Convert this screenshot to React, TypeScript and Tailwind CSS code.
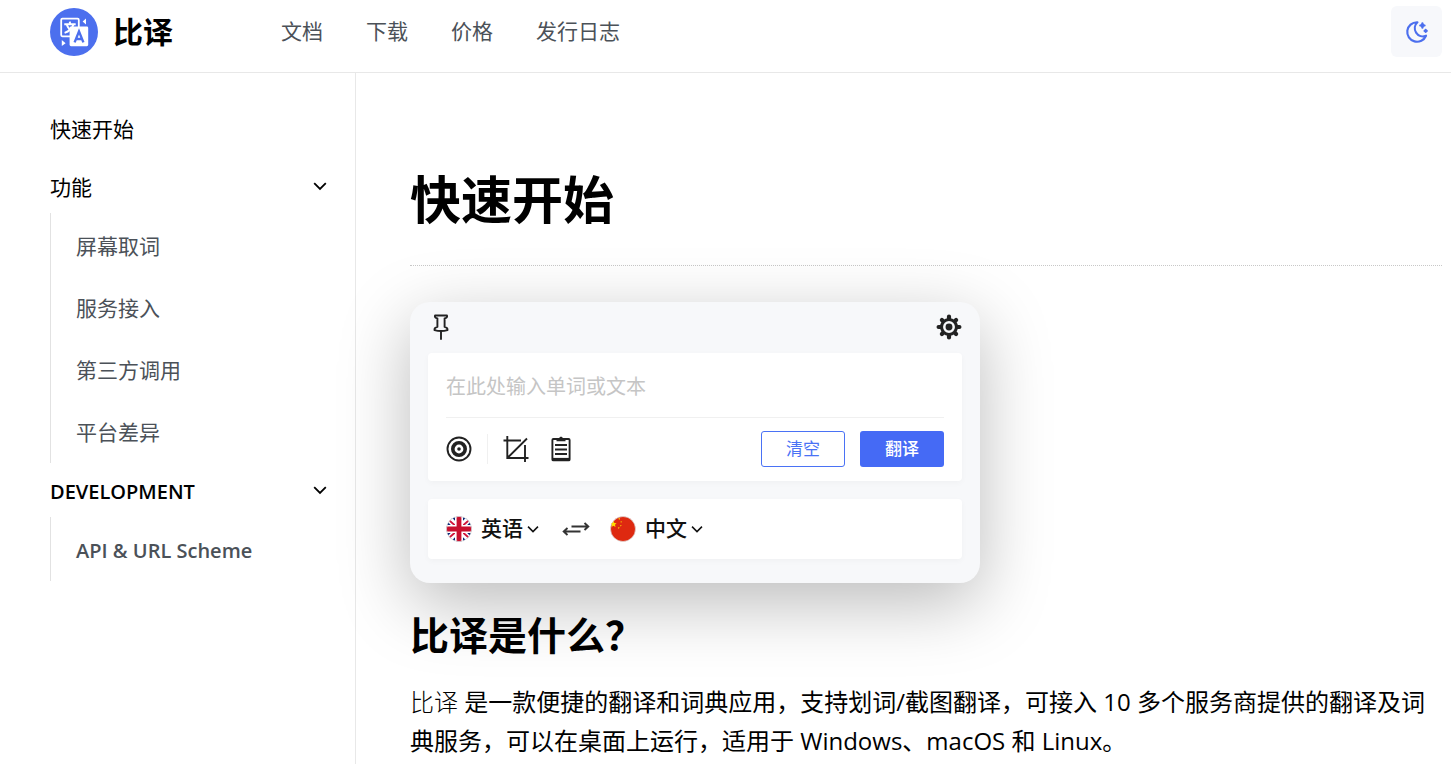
import { useState } from "react";
import clsx from "clsx";

interface NavGroup {
  title: string;
  items: string[];
}

const topLinks = ["文档", "下载", "价格", "发行日志"];

const navGroups: NavGroup[] = [
  { title: "功能", items: ["屏幕取词", "服务接入", "第三方调用", "平台差异"] },
  { title: "DEVELOPMENT", items: ["API & URL Scheme"] },
];

function Logo() {
  return (
    <svg viewBox="0 0 48 48" className="size-12 shrink-0" aria-hidden="true">
      <circle cx="24" cy="24" r="24" fill="#4c6fee" />
      <rect x="11.2" y="10.7" width="17.6" height="17.6" rx="1.2" fill="none" stroke="#fff" strokeWidth="1.8" />
      <g fill="none" stroke="#fff" strokeWidth="1.9">
        <path d="M14.3 16.2h11.4M19.6 13.6l.8 2.4M23.4 16.6c-1.4 4.2-4.4 6.8-8.8 8.2M16.8 16.6c1.2 3.6 3 5.6 6 7" />
      </g>
      <rect x="19.6" y="18.4" width="18.6" height="19.8" rx="1.4" fill="#fff" />
      <path
        d="M24.6 34.4 29 23.4l4.4 11M26.2 31h5.6"
        fill="none"
        stroke="#4c6fee"
        strokeWidth="2.4"
      />
      <path d="M36 10.500v6l-3.400-3zM11.800 32v6l3.800-2.800z" fill="#fff" />
    </svg>
  );
}

function MoonIcon() {
  return (
    <svg viewBox="0 0 24 24" className="size-[26px]" fill="none" stroke="currentColor" strokeWidth="2" strokeLinecap="round" strokeLinejoin="round" aria-hidden="true">
      <path d="M12 3h.393a7.500 7.500 0 0 0 7.920 12.446A9 9 0 1 1 12 2.992z" />
      <path d="M17 4a2 2 0 0 0 2 2 2 2 0 0 0-2 2 2 2 0 0 0-2-2 2 2 0 0 0 2-2" />
      <path d="M19 11h2m-1-1v2" />
    </svg>
  );
}

function Chevron({ className }: { className?: string }) {
  return (
    <svg viewBox="0 0 14 14" className={clsx("shrink-0", className)} fill="none" stroke="currentColor" strokeWidth="1.8" aria-hidden="true">
      <path d="M1.200 4.200L7 10l5.800-5.800" />
    </svg>
  );
}

function PinIcon() {
  return (
    <svg viewBox="0 0 16 26" className="h-[26px] w-4" fill="none" stroke="#222" strokeWidth="1.9" strokeLinecap="round" strokeLinejoin="round" aria-hidden="true">
      <path d="M2 1.500h12c.5 1.500-.4 2.300-2.400 2.800v8.600c2 .5 3.100 1.800 2.900 3.200-4 1.200-9 1.200-13 0-.2-1.400.9-2.700 2.900-3.200V4.300C2.400 3.800 1.500 3 2 1.500z" />
      <path d="M8 17.500v7.500" />
    </svg>
  );
}

function GearIcon() {
  return (
    <svg viewBox="0 0 26 26" className="size-[26px]" aria-hidden="true">
      <g stroke="#222" strokeWidth="4.2" strokeLinecap="round">
        <path d="M13 2.600v20.800M2.600 13h20.800M5.900 5.900l14.200 14.200M20.100 5.900L5.900 20.100" />
      </g>
      <circle cx="13" cy="13" r="7.500" fill="#222" stroke="#222" strokeWidth="3" />
      <circle cx="13" cy="13" r="4.700" fill="#222" stroke="#f7f8fa" strokeWidth="2.500" />
    </svg>
  );
}

function TargetIcon() {
  return (
    <svg viewBox="0 0 26 26" className="size-[26px]" fill="none" stroke="#222" aria-hidden="true">
      <circle cx="13" cy="13" r="11.500" strokeWidth="1.900" />
      <circle cx="13" cy="13" r="6.200" strokeWidth="3.600" />
      <circle cx="13" cy="13" r="1.800" fill="#222" stroke="none" />
    </svg>
  );
}

function CropIcon() {
  return (
    <svg viewBox="0 0 26 26" className="size-[26px]" fill="none" stroke="#222" strokeWidth="1.900" aria-hidden="true">
      <path d="M4.300 0v22h21.200M.500 4.500h17.500M22 9v17M4.300 22L24 2.500" />
    </svg>
  );
}

function ClipboardIcon() {
  return (
    <svg viewBox="0 0 20 26" className="h-[26px] w-5" fill="none" stroke="#222" strokeWidth="1.900" aria-hidden="true">
      <rect x="1.400" y="3" width="17.200" height="21.400" rx="1" />
      <path d="M1 23.400h18" strokeWidth="3" />
      <path d="M4 9h12M4 13.500h12M4 18h12" />
      <path d="M5.500 5.200V2.500H8c.5-2.300 3.500-2.300 4 0h2.500v2.700z" fill="#222" stroke="none" />
    </svg>
  );
}

function SwapIcon() {
  return (
    <svg viewBox="0 0 28 14" className="h-3.5 w-7" fill="none" stroke="#333" strokeWidth="1.900" aria-hidden="true">
      <path d="M9.500 4.500h17M22.500 1l3.800 3.500L22.500 8M18.500 9.500h-17M5.500 6L1.700 9.500 5.500 13" />
    </svg>
  );
}

function UkFlag() {
  return (
    <svg viewBox="0 0 26 26" className="size-[26px] shrink-0" aria-hidden="true">
      <defs>
        <clipPath id="uk">
          <circle cx="13" cy="13" r="12.500" />
        </clipPath>
      </defs>
      <g clipPath="url(#uk)">
        <path d="M0 0h26v26H0z" fill="#0a2a78" />
        <path d="M0 0l26 26M26 0L0 26" stroke="#fff" strokeWidth="6" />
        <path d="M0 1.500l26 23M26 1.500L0 24.500" stroke="#d0143a" strokeWidth="1.700" />
        <path d="M13 0v26M0 13h26" stroke="#fff" strokeWidth="8" />
        <path d="M13 0v26M0 13h26" stroke="#c8102e" strokeWidth="4.800" />
      </g>
      <circle cx="13" cy="13" r="12.600" fill="none" stroke="#ddd" strokeWidth=".7" />
    </svg>
  );
}

function ChinaFlag() {
  return (
    <svg viewBox="0 0 26 26" className="size-[26px] shrink-0" aria-hidden="true">
      <circle cx="13" cy="13" r="12.500" fill="#de2910" stroke="#ddd" strokeWidth=".7" />
      <path d="M3.400 5l1 2 2.200.2-1.600 1.500.5 2.300-2.100-1.200L1.500 11l.5-2.200-1-1.300 1.800-.4z" fill="#ffde00" />
      <path d="M8.200 2.600l1.800-.5-.6 1.800zM10.600 5.300l1.600.5-1.300 1zM10.300 9l1.500.6-1.400.9zM7.800 11.500l1.800-.2-.8 1.700z" fill="#ffde00" />
    </svg>
  );
}

function Header() {
  return (
    <header className="flex items-center border-b border-[#e8e8e8] pt-1.5 pr-[9px] pb-[15px] pl-[50px]">
      <a href="#" className="flex items-center gap-[15px] text-3xl font-bold text-black">
        <Logo />
        比译
      </a>
      <nav className="ml-[108px] flex gap-[43px] text-[21px] text-[#4b5158]">
        {topLinks.map((link) => (
          <a key={link} href="#">
            {link}
          </a>
        ))}
      </nav>
      <button
        type="button"
        aria-label="切换主题"
        className="ml-auto flex size-[51px] items-center justify-center rounded-md bg-[#f7f8fb] text-[#4c6fee]"
      >
        <MoonIcon />
      </button>
    </header>
  );
}

function Sidebar() {
  return (
    <aside className="w-[356px] shrink-0 border-r border-[#e8e8e8] pt-7 pr-7 pl-[50px] text-[21px]">
      <a href="#" className="flex h-[58px] items-center text-black">
        快速开始
      </a>
      {navGroups.map((group) => (
        <section key={group.title}>
          <button type="button" className="flex h-[54px] w-full items-center justify-between text-black">
            <span className={clsx("pt-1", /^[A-Z]/.test(group.title) && "text-xl font-semibold")}>
              {group.title}
            </span>
            <Chevron className="size-3.5" />
          </button>
          <ul className="border-l border-[#e2e2e2] py-px">
            {group.items.map((item) => (
              <li key={item}>
                <a
                  href="#"
                  className={clsx(
                    "flex h-[62px] items-center pt-1 pl-[25px] text-[#4b5158]",
                    /^[A-Z]/.test(item) && "text-xl font-semibold"
                  )}
                >
                  {item}
                </a>
              </li>
            ))}
          </ul>
        </section>
      ))}
    </aside>
  );
}

function Translator() {
  const [text, setText] = useState("");

  return (
    <div className="max-w-[570px] rounded-[20px] bg-[#f7f8fa] px-[18px] pb-6 shadow-[0_20px_70px_rgba(0,0,0,0.27)]">
      <div className="flex h-[51px] items-center justify-between pb-0.5 pl-[5px]">
        <button type="button" aria-label="置顶">
          <PinIcon />
        </button>
        <button type="button" aria-label="设置">
          <GearIcon />
        </button>
      </div>

      <div className="rounded bg-white px-[18px] shadow-[0_2px_6px_rgba(0,0,0,0.03)]">
        <input
          aria-label="输入文本"
          value={text}
          onChange={(e) => setText(e.target.value)}
          placeholder="在此处输入单词或文本"
          className="block h-[65px] w-full border-b border-[#f0f0f0] pt-0.5 text-xl outline-none placeholder:text-[#c5c5c5]"
        />
        <div className="flex h-[63px] items-center pb-0.5">
          <button type="button" aria-label="屏幕取词">
            <TargetIcon />
          </button>
          <span className="mx-[15px] h-[30px] w-px bg-[#f0f0f0]" />
          <button type="button" aria-label="截图翻译">
            <CropIcon />
          </button>
          <button type="button" aria-label="剪贴板" className="ml-[22px]">
            <ClipboardIcon />
          </button>
          <button
            type="button"
            onClick={() => setText("")}
            className="ml-auto h-9 w-[84px] rounded-[3px] border border-[#4a72f5] text-[17px] text-[#4a72f5]"
          >
            清空
          </button>
          <button type="button" className="ml-[15px] h-9 w-[84px] rounded-[3px] bg-[#456af5] text-[17px] font-medium text-white">
            翻译
          </button>
        </div>
      </div>

      <div className="mt-[18px] flex h-[60px] items-center rounded bg-white px-[18px] text-[21px] text-[#111] shadow-[0_2px_6px_rgba(0,0,0,0.03)]">
        <UkFlag />
        <select aria-label="源语言" className="ml-[9px] appearance-none bg-transparent font-medium">
          <option>英语</option>
        </select>
        <Chevron className="ml-1 size-3" />
        <button type="button" aria-label="交换语言" className="mr-5 ml-[23px]">
          <SwapIcon />
        </button>
        <ChinaFlag />
        <select aria-label="目标语言" className="ml-[9px] appearance-none bg-transparent font-medium">
          <option>中文</option>
        </select>
        <Chevron className="ml-1 size-3" />
      </div>
    </div>
  );
}

export default function App() {
  return (
    <div className="flex min-h-screen flex-col bg-white font-['Open_Sans','Noto_Sans_CJK_SC',sans-serif] text-black" lang="zh-CN">
      <Header />
      <div className="flex flex-1">
        <Sidebar />
        <main className="min-w-0 flex-1 pt-[88px] pr-[9px] pl-[54px]">
          <h1 className="border-b border-dotted border-[#c8c8c8] pb-7 text-[51px] leading-[76px] font-bold">
            快速开始
          </h1>
          <div className="mt-9">
            <Translator />
          </div>
          <h2 className="mt-[23px] text-[39px] leading-[58px] font-bold">比译是什么？</h2>
          <p className="mt-[18px] text-2xl leading-[39px]">
            <span className="font-light">比译</span> 是一款便捷的翻译和词典应用，支持划词/截图翻译，可接入 10 多个服务商提供的翻译及词典服务，可以在桌面上运行，适用于 Windows、macOS 和 Linux。
          </p>
        </main>
      </div>
    </div>
  );
}
